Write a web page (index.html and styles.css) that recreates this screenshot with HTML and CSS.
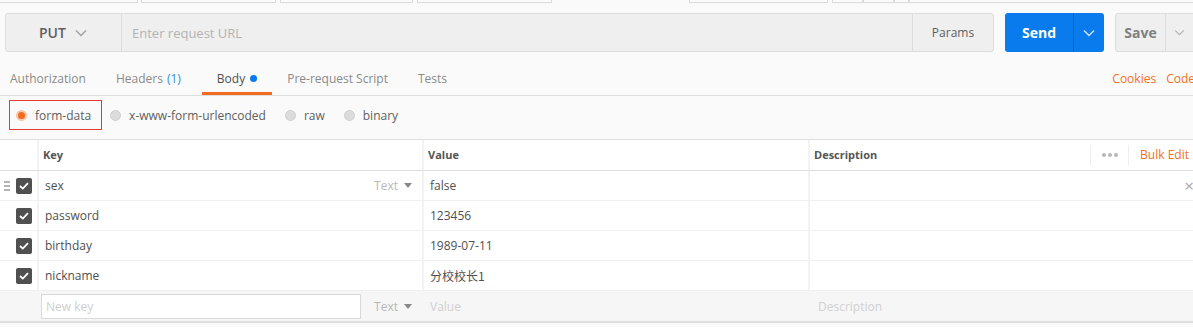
FILE: index.html
```html
<!DOCTYPE html>
<html lang="zh">
<head>
<meta charset="UTF-8" />
<title>Request Builder</title>
<link rel="stylesheet" href="styles.css">
</head>
<body>

<!-- верхняя полоска -->
<div class="top-strip">
  <span class="strip-box" style="width:139px"></span>
  <span class="strip-box gap4" style="width:135px"></span>
  <span class="strip-box gap5" style="width:133px"></span>
  <span class="strip-box gap5" style="width:135px"></span>
  <span class="strip-box" style="width:139px;margin-left:137px"></span>
  <span class="strip-box gap5" style="width:31px"></span>
  <span class="strip-box" style="width:31px"></span>
  <span class="strip-box" style="width:15px"></span>
  <span class="strip-box" style="width:300px"></span>
</div>

<!-- строка URL -->
<div class="url-row">
  <div class="url-group">
    <div class="method">PUT
      <svg class="chev" width="12" height="8" viewBox="0 0 12 8"><path d="M1 1.5 L6 6.5 L11 1.5" fill="none" stroke="#a0a0a0" stroke-width="1.4"/></svg>
    </div>
    <div class="url-input">Enter request URL</div>
    <div class="params">Params</div>
  </div>
  <div class="send-btn">
    <span class="send-label">Send</span>
    <span class="send-drop">
      <svg width="12" height="8" viewBox="0 0 12 8"><path d="M1 1.5 L6 6.5 L11 1.5" fill="none" stroke="#cfe4fb" stroke-width="1.4"/></svg>
    </span>
  </div>
  <div class="save-btn">
    <span class="save-label">Save</span>
    <span class="save-drop">
      <svg width="11" height="7" viewBox="0 0 12 8"><path d="M1 1.5 L6 6.5 L11 1.5" fill="none" stroke="#b5b5b5" stroke-width="1.4"/></svg>
    </span>
  </div>
</div>

<!-- вкладки -->
<div class="tabs">
  <div class="tab">Authorization</div>
  <div class="tab headers">Headers <span class="count">(1)</span></div>
  <div class="tab active">Body <span class="dot"></span></div>
  <div class="tab">Pre-request Script</div>
  <div class="tab">Tests</div>
  <div class="tab-links">
    <span>Cookies</span>
    <span>Code</span>
  </div>
</div>

<!-- тип тела -->
<div class="body-types">
  <label class="btype selected"><span class="radio on"></span>form-data</label>
  <label class="btype"><span class="radio"></span>x-www-form-urlencoded</label>
  <label class="btype"><span class="radio"></span>raw</label>
  <label class="btype"><span class="radio"></span>binary</label>
</div>

<!-- таблица -->
<div class="kv-table">
  <div class="kv-row head">
    <div class="cell first"></div>
    <div class="cell">Key</div>
    <div class="cell">Value</div>
    <div class="cell desc-head">Description
      <span class="head-tools">
        <span class="dots"><i></i><i></i><i></i></span>
        <span class="bulk">Bulk Edit</span>
      </span>
    </div>
  </div>

  <div class="kv-row">
    <div class="cell first">
      <svg class="handle" width="6" height="10" viewBox="0 0 6 10"><rect x="0" y="0" width="6" height="2" fill="#b5b5b5"/><rect x="0" y="4" width="6" height="2" fill="#b5b5b5"/><rect x="0" y="8" width="6" height="2" fill="#b5b5b5"/></svg>
      <span class="check"><svg width="10" height="8" viewBox="0 0 10 8"><path d="M1 4 L3.8 6.6 L9 1.2" fill="none" stroke="#fff" stroke-width="1.8"/></svg></span>
    </div>
    <div class="cell key">sex <span class="type">Text <i class="caret"></i></span></div>
    <div class="cell">false</div>
    <div class="cell desc"><span class="remove">&times;</span></div>
  </div>

  <div class="kv-row">
    <div class="cell first">
      <span class="check"><svg width="10" height="8" viewBox="0 0 10 8"><path d="M1 4 L3.8 6.6 L9 1.2" fill="none" stroke="#fff" stroke-width="1.8"/></svg></span>
    </div>
    <div class="cell key">password</div>
    <div class="cell">123456</div>
    <div class="cell desc"></div>
  </div>

  <div class="kv-row">
    <div class="cell first">
      <span class="check"><svg width="10" height="8" viewBox="0 0 10 8"><path d="M1 4 L3.8 6.6 L9 1.2" fill="none" stroke="#fff" stroke-width="1.8"/></svg></span>
    </div>
    <div class="cell key">birthday</div>
    <div class="cell">1989-07-11</div>
    <div class="cell desc"></div>
  </div>

  <div class="kv-row">
    <div class="cell first">
      <span class="check"><svg width="10" height="8" viewBox="0 0 10 8"><path d="M1 4 L3.8 6.6 L9 1.2" fill="none" stroke="#fff" stroke-width="1.8"/></svg></span>
    </div>
    <div class="cell key">nickname</div>
    <div class="cell cjk">分校校长1</div>
    <div class="cell desc"></div>
  </div>

  <div class="kv-row new-row">
    <div class="cell first"></div>
    <div class="cell key"><span class="new-key">New key</span><span class="type">Text <i class="caret"></i></span></div>
    <div class="cell ph">Value</div>
    <div class="cell ph desc-ph">Description</div>
  </div>
</div>

</body>
</html>
```

FILE: styles.css
```css
/* Общие стили */
* {
  box-sizing: border-box;
  margin: 0;
  padding: 0;
}

body, html {
  height: 100%;
  font-family: "Open Sans", "Noto Sans", "Noto Sans CJK SC", sans-serif;
  font-size: 12px;
  color: #505050;
  background: #fafafa;
  overflow: hidden;
}

/* верхняя полоска */
.top-strip {
  display: flex;
  height: 3px;
  margin-left: -1px;
}

.strip-box {
  display: block;
  flex-shrink: 0;
  height: 3px;
  background: #fbfbfb;
  border: 1px solid #dadada;
  border-top: none;
}

.strip-box.gap4 {
  margin-left: 3px;
}

.strip-box.gap5 {
  margin-left: 4px;
}

/* строка URL */
.url-row {
  display: flex;
  height: 39px;
  margin-top: 10px;
  padding-left: 5px;
  gap: 11px;
}

.url-row > div {
  flex-shrink: 0;
}

.url-group {
  display: flex;
  width: 989px;
  background: #efefef;
  border: 1px solid #dcdcdc;
  border-radius: 3px;
}

.method {
  width: 116px;
  display: flex;
  align-items: center;
  padding-left: 33px;
  font-size: 14px;
  font-weight: 600;
  color: #606060;
  border-right: 1px solid #dcdcdc;
}

.method .chev {
  margin-left: 9px;
}

.url-input {
  flex: 1;
  display: flex;
  align-items: center;
  padding-left: 10px;
  font-size: 13px;
  color: #b3b3b3;
}

.params {
  width: 81px;
  display: flex;
  align-items: center;
  justify-content: center;
  font-size: 12px;
  color: #606060;
  border-left: 1px solid #dcdcdc;
}

.send-btn {
  display: flex;
  width: 99px;
  background: #097bed;
  border-radius: 3px;
  color: #fff;
}

.send-label {
  width: 69px;
  display: flex;
  align-items: center;
  justify-content: center;
  font-size: 14px;
  font-weight: 700;
  border-right: 1px solid #0766c6;
}

.send-drop {
  flex: 1;
  display: flex;
  align-items: center;
  justify-content: center;
}

.save-btn {
  display: flex;
  width: 100px;
  background: #efefef;
  border: 1px solid #dcdcdc;
  border-radius: 3px;
}

.save-label {
  width: 50px;
  display: flex;
  align-items: center;
  justify-content: center;
  font-size: 14px;
  font-weight: 700;
  color: #808080;
  border-right: 1px solid #dcdcdc;
}

.save-drop {
  width: 26px;
  display: flex;
  align-items: center;
  justify-content: center;
}

/* вкладки */
.tabs {
  display: flex;
  height: 44px;
  padding-left: 10px;
  border-bottom: 1px solid #dedede;
}

.tab {
  display: flex;
  align-items: center;
  padding: 12px 15px 0;
  font-size: 12px;
  color: #8a8a8a;
  border-bottom: 3px solid transparent;
}

.tab:first-child {
  padding-left: 0;
}

.tab.headers {
  margin-right: 6px;
}

.tab .count {
  color: #2d8fe6;
  margin-left: 4px;
}

.tab.active {
  color: #505050;
  border-bottom-color: #f26b21;
}

.tab .dot {
  display: inline-block;
  width: 7px;
  height: 7px;
  border-radius: 50%;
  background: #097bed;
  margin-left: 5px;
}

.tab-links {
  margin-left: auto;
  display: flex;
  align-items: center;
  gap: 10px;
  padding-top: 12px;
  margin-bottom: 3px;
  font-size: 12px;
  color: #f47023;
  margin-right: -2px;
}

/* тип тела */
.body-types {
  display: flex;
  align-items: center;
  height: 44px;
  padding-left: 9px;
  padding-bottom: 5px;
  border-bottom: 1px solid #dedede;
}

.btype {
  display: flex;
  align-items: center;
  height: 30px;
  padding: 0 10px 0 6px;
  margin-right: 1px;
  font-size: 12px;
  color: #606060;
  border: 1px solid transparent;
}

.btype.selected {
  border-color: #e53935;
}

.radio {
  display: inline-block;
  width: 11px;
  height: 11px;
  border-radius: 50%;
  background: #dcdcdc;
  border: 1px solid #cfcfcf;
  margin-right: 8px;
}

.radio.on {
  background: #f26b21;
  border: 2px solid #f8c7a8;
}

/* таблица */
.kv-table {
  background: #fff;
}

.kv-row {
  display: grid;
  grid-template-columns: 37px 385px 386px 1fr;
  height: 30px;
  border-bottom: 1px solid #f0f0f0;
}

.kv-row.head {
  height: 31px;
  border-bottom: 1px solid #dedede;
}

.cell {
  display: flex;
  align-items: center;
  padding-left: 6px;
  font-size: 12px;
  color: #505050;
  border-left: 2px solid #f3f3f3;
}

.cell.first {
  border-left: none;
  padding-left: 4px;
}

.head .cell {
  font-size: 11px;
  font-weight: 700;
  color: #555;
  padding-left: 4px;
  padding-bottom: 1px;
}

.head-tools {
  margin-left: auto;
  display: flex;
  align-items: center;
  height: 20px;
}

.head-tools .dots {
  display: flex;
  align-items: center;
  gap: 2px;
  height: 20px;
  padding: 0 10px 0 11px;
  border-left: 1px solid #eee;
  border-right: 1px solid #eee;
}

.head-tools .dots i {
  display: block;
  width: 4px;
  height: 4px;
  border-radius: 50%;
  background: #b8b8b8;
}

.head-tools .bulk {
  font-size: 12px;
  font-weight: 400;
  color: #f47023;
  padding-left: 11px;
  margin-right: 4px;
}

.handle {
  margin-right: 6px;
}

.check {
  display: inline-flex;
  align-items: center;
  justify-content: center;
  width: 16px;
  height: 16px;
  border-radius: 2px;
  background: #505050;
  margin-left: 12px;
}

.kv-row:nth-child(2) .check {
  margin-left: 0;
}

.type {
  margin-left: auto;
  margin-right: 10px;
  color: #b8b8b8;
  display: flex;
  align-items: center;
}

.caret {
  display: inline-block;
  width: 0;
  height: 0;
  border-left: 4px solid transparent;
  border-right: 4px solid transparent;
  border-top: 5px solid #8a8a8a;
  margin-left: 6px;
}

.cjk {
  font-family: "Noto Sans CJK SC", sans-serif;
}

.desc {
  justify-content: flex-end;
}

.remove {
  font-size: 17px;
  color: #aaa;
  margin-right: -1px;
}

.new-row {
  background: #f6f6f6;
  height: 32px;
  border-bottom: 2px solid #dedede;
}

.new-row .cell {
  border-left-color: transparent;
}

.new-key {
  display: flex;
  align-items: center;
  width: 320px;
  height: 25px;
  margin-left: -4px;
  padding-left: 4px;
  background: #fff;
  border: 1px solid #d9d9d9;
  color: #cfcfcf;
}

.ph {
  color: #d0d0d0;
}

.desc-ph {
  padding-left: 8px;
}
```
